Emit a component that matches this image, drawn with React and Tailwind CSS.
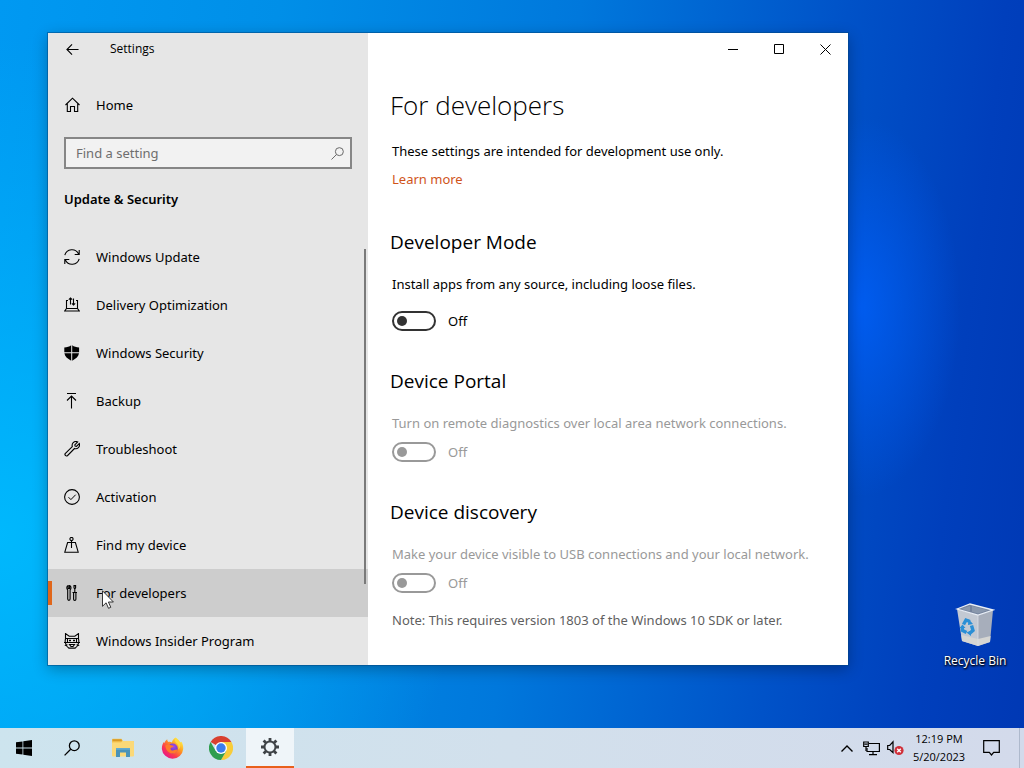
import { useState } from 'react';

const UpdateIcon = () => (
  <svg width="16" height="16" viewBox="0 0 16 16" fill="none" stroke="currentColor" strokeWidth="1.1">
    <path d="M.8 6.200A7.400 7.400 0 0 1 14.600 5M15.200 1v4.500h-4.500" />
    <path d="M15.200 9.800A7.400 7.400 0 0 1 1.400 11M.8 15v-4.500h4.500" />
  </svg>
);

const DeliveryIcon = () => (
  <svg width="16" height="16" viewBox="0 0 16 16" fill="none" stroke="currentColor" strokeWidth="1.1">
    <path d="M4 3.500H2.500v8M12 3.500h1.500v8M2.500 11.500h11l1.800 2.500H.7z" />
    <path d="M6.500 7.500V1M4.800 2.700 6.500 1l1.700 1.700M9.500 1.500V8M7.900 6.300 9.500 7.900l1.700-1.600" />
  </svg>
);

const ShieldIcon = () => (
  <svg width="16" height="16" viewBox="0 0 16 16" fill="currentColor">
    <path d="M7.200.2C5.500 1.600 3 2.400.3 2.400v4.900h6.900zM8.200.2c1.700 1.400 4.200 2.200 6.900 2.200v4.900H8.200zM.4 8.300h6.800v7.400C3.300 13.700.9 11.500.4 8.300zM15 8.300H8.200v7.400c3.900-2 6.300-4.200 6.800-7.400z" />
  </svg>
);

const BackupIcon = () => (
  <svg width="16" height="16" viewBox="0 0 16 16" fill="none" stroke="currentColor" strokeWidth="1.1">
    <path d="M3 .5h9M7.500 15.500V3M3 7.500 7.500 3 12 7.500" />
  </svg>
);

const WrenchIcon = () => (
  <svg width="16" height="16" viewBox="0 0 16 16" fill="none" stroke="currentColor" strokeWidth="1.1">
    <path d="M13.700.9 10.800 3.800l.3 1.300 1.300.3L15.300 2.500c.5 1.500.2 3.100-.9 4.200-1.100 1-2.500 1.300-3.900.8L3.400 14.700a1.600 1.600 0 0 1-2.200-2.200L8.300 5.600C7.900 4.100 8.100 2.700 9.200 1.600 10.400.4 12.200.2 13.700.9z" />
  </svg>
);

const ActivationIcon = () => (
  <svg width="16" height="16" viewBox="0 0 16 16" fill="none" stroke="currentColor">
    <circle cx="8" cy="8" r="7.400" strokeWidth="1.1" />
    <path d="m4.500 8.200 2.400 2.400 4.800-4.900" />
  </svg>
);

const FindIcon = () => (
  <svg width="16" height="16" viewBox="0 0 16 16" fill="none" stroke="currentColor" strokeWidth="1.1">
    <circle cx="7.500" cy="2" r="1.600" />
    <path d="M7.500 3.600V11M7.500 5.500H3.600L.8 15.200h13.400L11.400 5.500H7.500" />
  </svg>
);

const DevIcon = () => (
  <svg width="16" height="16" viewBox="0 0 16 16" fill="none" stroke="currentColor" strokeWidth="1.1">
    <path d="M4.200.5v3h1.400v-3c1 .4 1.400 1.300 1.400 2.300 0 .9-.3 1.600-.9 2v9.300c0 1.700-2.400 1.700-2.400 0V4.800c-.6-.4-.9-1.100-.9-2 0-1 .4-1.900 1.400-2.300z" />
    <path d="M10 .6h1.600v2.200L10.800 4 10 2.800zM10.800 4v3.500M8.500 7.500H13M9.600 7.500v6.700c0 1.600 2.300 1.600 2.300 0V7.500" />
  </svg>
);

const InsiderIcon = () => (
  <svg width="16" height="16" viewBox="0 0 16 16" fill="none" stroke="currentColor" strokeWidth="1.1">
    <path d="M1.500 6V.6l3.700 2.700h5.600L14.500.6V6c.4 1.300.5 2.700 0 4.200-.4 2-1.600 4-3.200 4.900H4.700C3.100 14.200 1.900 12.200 1.500 10.200 1 8.700 1.100 7.300 1.500 6z" />
    <path d="M1.500 5.500h13M3.500 5.500v4h9v-4M0 9.500h3.500M12.500 9.500H16M.8 12.500l2.700-.8M15.200 12.500l-2.700-.8M5.500 11.500h5l-1.500 2H7z" />
    <path d="M5 7.500h2M9 7.500h2" strokeWidth="1.600" />
  </svg>
);

const HomeIcon = () => (
  <svg width="16" height="16" viewBox="0 0 16 16" fill="none" stroke="currentColor" strokeWidth="1.1">
    <path d="M1.500 8 8.500 1.200 15.500 8M3.300 6.500v8h3.200V9.500h4v5h3.200v-8" />
  </svg>
);

const SearchIcon = ({ size, width }) => (
  <svg width={size} height={size} viewBox="0 0 16 16" fill="none" stroke="currentColor" strokeWidth={width}>
    <circle cx="10.300" cy="5.700" r="4.900" />
    <path d="M6.700 9.300.6 15.400" />
  </svg>
);

const FolderIcon = () => (
  <svg width="22" height="20" viewBox="0 0 22 20">
    <path d="M0 1.500Q0 .8.8.8h8.700L11 3h10q1 0 1 1v13H0z" fill="#f4c553" />
    <path d="M.5 1.200h9l.5 2H.5z" fill="#d99a26" />
    <path d="M0 4.500h9l1.500-1.500H21q1 0 1 1v13.500q0 1-1 1H1q-1 0-1-1z" fill="#fbd978" />
    <path d="M4 10h14v9h-4v-4.500H8V19H4z" fill="#4a93b8" />
    <path d="M4 10h14v1.800H4z" fill="#62abd0" />
  </svg>
);

const FirefoxIcon = () => (
  <svg width="23" height="23" viewBox="0 0 24 24">
    <defs>
      <linearGradient id="ff-body" x1="0.85" y1="0.1" x2="0.15" y2="0.9">
        <stop offset="0" stopColor="#fff04a" />
        <stop offset="0.35" stopColor="#ff9a1f" />
        <stop offset="0.7" stopColor="#fb3a4e" />
        <stop offset="1" stopColor="#e8158c" />
      </linearGradient>
      <radialGradient id="ff-globe" cx="0.6" cy="0.3" r="0.8">
        <stop offset="0" stopColor="#a050e8" />
        <stop offset="1" stopColor="#5a2bb8" />
      </radialGradient>
    </defs>
    <path d="M15.200.5c3.500 2 4 4.100 5.100 5 0 0 .6.200.9-.8 1.500 2 2.100 4.800 2 7.800A11.200 11.200 0 0 1 .9 12.400C.8 9.200 1.800 6.500 3.300 4.900c0 0-.2 1 .2 1.600C4.300 4.200 5.300 3.200 6.500 2.300c0 1.500.5 2.400 1.300 2.900 1.500-.3 2.800 0 3.600.5C11.900 3.500 13 1.700 15.200.5z" fill="url(#ff-body)" />
    <circle cx="12.200" cy="12" r="5.200" fill="url(#ff-globe)" />
    <path d="M4.500 9.200c1.500-1.600 4.200-1.900 6-.6 1.700.1 2.600.6 2.500 1.200-.3.900-2.800 1-3.100 2.100-.1 1.800 2 2.900 4.300 1.700 1.800-1 2.900-.5 3 .1-.9 2.700-3.700 4-6.300 3.400-4-.8-6-4.300-6.400-7.900z" fill="#ff7a2a" />
    <path d="M15.200 1c-1.600 2.900.2 4.600 1.800 6.200 1.600 1.800 1.800 4 .8 6.200 3.300-2.900 3-6.300.8-9z" fill="#ffdc3e" />
  </svg>
);

const ChromeIcon = () => (
  <svg width="24" height="24" viewBox="0 0 24 24">
    <path d="M12 12 1.600 6A12 12 0 0 1 22.400 6z" fill="#d8402f" />
    <path d="M12 6h10.400A12 12 0 0 1 12 24l5.200-9z" fill="#f8cc3a" />
    <path d="M1.600 6A12 12 0 0 0 12 24l5.200-9H6.800z" fill="#2f9e4e" />
    <circle cx="12" cy="12" r="6" fill="#fff" />
    <circle cx="12" cy="12" r="4.700" fill="#3b7ded" />
  </svg>
);

const GearIcon = () => (
  <svg width="18" height="18" viewBox="0 0 18 18" fill="none" stroke="#3f4347">
    <circle cx="9" cy="9" r="5.500" strokeWidth="2" />
    <path d="M9 0v3.500M9 14.500V18M0 9h3.500M14.500 9H18M2.600 2.600l2.500 2.500M12.900 12.900l2.500 2.500M2.600 15.400l2.500-2.500M12.900 5.100l2.500-2.500" strokeWidth="2.800" />
  </svg>
);

const RecycleBin = () => (
  <svg width="40" height="44" viewBox="0 0 40 44">
    <path d="M2 6 23 12 23 43 7 38z" fill="#c3c9d3" />
    <path d="M23 12 38 7l-3 32-12 4z" fill="#a7aebb" />
    <path d="M2 6 15 1l23 6-15 5z" fill="#74839d" />
    <path d="M6 6 15 3v5.500zM17 3l16 4.200-10 3.200-6-1.700z" fill="#8a98ad" />
    <path d="M6.300 32 23 36l12.600-3-.6 6-12 4L7 38z" fill="#d6d6d3" />
    <path d="M2 6 15 1l23 6-15 5z" fill="none" stroke="#e9eef5" strokeWidth="1.300" />
    <path d="M23 12v31" stroke="#dbe0e8" strokeWidth="0.800" />
    <g fill="none" stroke="#2a8fd6" strokeWidth="3.400">
      <path d="M8.500 21.500l2.500-4.500 4 1.500" />
      <path d="M16.500 22.500l1.500 5-3.500 3" />
      <path d="M11.500 29.500 7.500 27.500l-.3-3.500" />
    </g>
    <path d="M13.500 16l4.500 5-5 1zM16 27.500v5.500l-4.500-3.500zM4.500 25l3-3.500 3 3.500z" fill="#2a8fd6" />
  </svg>
);

const NAV = [
  { label: 'Windows Update', Icon: UpdateIcon },
  { label: 'Delivery Optimization', Icon: DeliveryIcon },
  { label: 'Windows Security', Icon: ShieldIcon },
  { label: 'Backup', Icon: BackupIcon },
  { label: 'Troubleshoot', Icon: WrenchIcon },
  { label: 'Activation', Icon: ActivationIcon },
  { label: 'Find my device', Icon: FindIcon },
  { label: 'For developers', Icon: DevIcon },
  { label: 'Windows Insider Program', Icon: InsiderIcon },
];

function Toggle({ id, disabled }) {
  const [on, setOn] = useState(false);
  return (
    <div className={`flex items-center gap-3 pl-1 h-5 ${disabled ? 'text-[#999999]' : 'text-black'}`}>
      <input
        id={id}
        type="checkbox"
        checked={on}
        disabled={disabled}
        onChange={(e) => setOn(e.target.checked)}
        className="appearance-none w-11 h-5 shrink-0 rounded-full border-2 border-[#333333] disabled:border-[#999999] flex items-center px-[3px] before:block before:size-[10px] before:rounded-full before:bg-[#333333] disabled:before:bg-[#999999] checked:justify-end"
      />
      <label htmlFor={id}>{on ? 'On' : 'Off'}</label>
    </div>
  );
}

function Sidebar() {
  const [active, setActive] = useState('For developers');
  return (
    <aside className="relative w-80 shrink-0 bg-[#e6e6e6] overflow-hidden">
      {/* Title bar */}
      <div className="h-8 flex items-center">
        <button aria-label="Back" className="w-12 h-8 flex items-center justify-center">
          <svg width="13" height="13" viewBox="0 0 14 14" fill="none" stroke="currentColor" strokeWidth="1.2">
            <path d="M13.500 7H1M6.500 1.500 1 7l5.500 5.500" />
          </svg>
        </button>
        <span className="ml-[14px] text-[12px] font-['Open_Sans']">Settings</span>
      </div>

      <button className="mt-4 w-full h-12 px-4 flex items-center gap-4">
        <HomeIcon />
        Home
      </button>

      <div className="mx-4 mt-2 h-8 flex items-center border-2 border-[#868686] bg-[#f2f2f2] text-[#666666] pl-[10px] pr-[6px]">
        <input
          type="text"
          aria-label="Find a setting"
          placeholder="Find a setting"
          className="flex-1 min-w-0 bg-transparent outline-none placeholder:text-[#6e6e6e]"
        />
        <SearchIcon size={13} width={1.2} />
      </div>

      <h2 className="mx-4 mt-5 leading-5 font-semibold">Update &amp; Security</h2>

      <nav className="mt-6">
        {NAV.map(({ label, Icon }) => (
          <button
            key={label}
            onClick={() => setActive(label)}
            className={`relative w-full h-12 px-4 flex items-center gap-4 ${active === label ? 'bg-[#cdcdcd]' : ''}`}
          >
            {active === label && <span className="absolute left-0 top-3 w-1 h-6 bg-[#e0661a]" />}
            <Icon />
            {label}
          </button>
        ))}
      </nav>

      {/* Scrollbar */}
      <div className="absolute right-[2px] top-[216px] bottom-[81px] w-[2px] bg-[#7a7a7a]" />

      {/* Mouse pointer */}
      <svg className="absolute left-[54px] top-[557px]" width="12" height="19" viewBox="0 0 12 19">
        <path d="M.5.8v15.500l3.600-3.500 2.400 5.500 2.300-1-2.400-5.300h5z" fill="#fff" stroke="#222" strokeWidth="0.9" />
      </svg>
    </aside>
  );
}

function Content() {
  return (
    <section className="flex-1 min-w-0 bg-white overflow-hidden">
      <div className="h-8 flex justify-end">
        <button aria-label="Minimize" className="w-[46px] flex items-center justify-center">
          <svg width="10" height="10" viewBox="0 0 10 10" stroke="currentColor"><path d="M0 5.500h10" /></svg>
        </button>
        <button aria-label="Maximize" className="w-[46px] flex items-center justify-center">
          <svg width="10" height="10" viewBox="0 0 10 10" fill="none" stroke="currentColor"><path d="M.5.5h9v9h-9z" /></svg>
        </button>
        <button aria-label="Close" className="w-[46px] flex items-center justify-center">
          <svg width="11" height="11" viewBox="0 0 11 11" stroke="currentColor"><path d="m.5.5 10 10M10.500.5l-10 10" /></svg>
        </button>
      </div>

      <div className="pl-5 pr-5">
        <h1 className="mt-[22px] pl-0.5 text-[26px] leading-9 font-light font-['Open_Sans']">For developers</h1>
        <p className="mt-[18px] pl-1">These settings are intended for development use only.</p>
        <p className="mt-2 pl-1"><a href="#learn" className="text-[#d0541a]">Learn more</a></p>

        <h2 className="mt-[39px] pl-0.5 text-[19px] leading-7 font-['Open_Sans']">Developer Mode</h2>
        <p className="mt-[18px] mb-[17px] pl-1">Install apps from any source, including loose files.</p>
        <Toggle id="developer-mode" />

        <h2 className="mt-9 pl-0.5 text-[19px] leading-7 font-['Open_Sans']">Device Portal</h2>
        <p className="mt-[18px] mb-[9px] pl-1 text-[#999999]">Turn on remote diagnostics over local area network connections.</p>
        <Toggle id="device-portal" disabled />

        <h2 className="mt-9 pl-0.5 text-[19px] leading-7 font-['Open_Sans']">Device discovery</h2>
        <p className="mt-[18px] mb-[9px] pl-1 text-[#999999]">Make your device visible to USB connections and your local network.</p>
        <Toggle id="device-discovery" disabled />
        <p className="mt-[17px] pl-1 text-[#5f5f5f]">Note: This requires version 1803 of the Windows 10 SDK or later.</p>
      </div>
    </section>
  );
}

function Taskbar() {
  return (
    <footer className="h-10 shrink-0 flex items-stretch bg-gradient-to-r from-[#cde4ee] via-[#d2e0ec] to-[#d3daeb]">
      <button aria-label="Start" className="w-12 flex items-center justify-center">
        <svg width="16" height="16" viewBox="0 0 16 16" fill="#000">
          <path d="M0 2.300 6.500 1.400v6.200H0zM7.300 1.300 16 0v7.600H7.300zM0 8.400h6.500v6.200L0 13.700zM7.300 8.400H16V16l-8.700-1.300z" />
        </svg>
      </button>
      <button aria-label="Search" className="w-12 flex items-center justify-center">
        <SearchIcon size={16} width={1.3} />
      </button>
      <div className="pl-[3px] flex gap-px">
        <button aria-label="File Explorer" className="w-12 flex items-center justify-center"><FolderIcon /></button>
        <button aria-label="Firefox" className="w-12 flex items-center justify-center"><FirefoxIcon /></button>
        <button aria-label="Chrome" className="w-12 flex items-center justify-center"><ChromeIcon /></button>
        <button aria-label="Settings" className="w-12 flex items-center justify-center bg-[#eff5f9] border-b-2 border-[#e8601c]"><GearIcon /></button>
      </div>

      {/* Tray */}
      <div className="ml-auto flex items-center">
        <button aria-label="Show hidden icons" className="w-6 h-full flex items-center justify-center">
          <svg width="12" height="7" viewBox="0 0 12 7" fill="none" stroke="currentColor" strokeWidth="1.4"><path d="M.5 6.500 6 1l5.500 5.500" /></svg>
        </button>
        <button aria-label="Network" className="w-6 h-full flex items-center justify-center">
          <svg width="17" height="15" viewBox="0 0 17 15" fill="none" stroke="currentColor" strokeWidth="1.2">
            <path d="M6 2.500h10.400v8H4V7M10 10.500v3M6 13.700h8" />
            <path d="M.7 1h4.600v4.500H.7zM3 5.500V10M1.500 3.200h3" />
          </svg>
        </button>
        <button aria-label="Volume muted" className="w-6 h-full flex items-center justify-center">
          <svg width="17" height="16" viewBox="0 0 17 16" fill="none" stroke="currentColor" strokeWidth="1.2">
            <path d="M.7 5.500h2L6 1.800v10.900L2.700 9.500h-2z" />
            <circle cx="12" cy="10.500" r="4.600" fill="#d0303a" stroke="none" />
            <path d="m10.200 8.700 3.600 3.600M13.800 8.700l-3.600 3.600" stroke="#fff" strokeWidth="1.4" />
          </svg>
        </button>
        <div className="w-[64px] text-center text-[11px] leading-[18px] whitespace-nowrap font-['Open_Sans']">
          <div>12:19 PM</div>
          <div>5/20/2023</div>
        </div>
        <button aria-label="Notifications" className="w-10 h-full flex items-center justify-center">
          <svg width="17" height="16" viewBox="0 0 17 16" fill="none" stroke="currentColor" strokeWidth="1.2">
            <path d="M.7.7h15.600v11.600h-5.600L8.500 15l-2.200-2.700H.7z" />
          </svg>
        </button>
        <button aria-label="Show desktop" className="ml-2 w-[5px] h-full border-l border-[#aeb9cc]" />
      </div>
    </footer>
  );
}

export default function App() {
  return (
    <div className="h-screen flex flex-col text-[13px] leading-5 text-black font-['Noto_Sans','Open_Sans',sans-serif] bg-[radial-gradient(ellipse_100px_190px_at_84%_40%,rgba(0,96,250,0.8),transparent),radial-gradient(ellipse_45%_65%_at_0%_70%,rgba(0,190,255,0.85),transparent),linear-gradient(97deg,#0099f2_0%,#008fe8_25%,#0078dc_52%,#0052c8_76%,#003fbc_90%,#0038b4_100%)]">
      <main className="relative flex-1 min-h-0 flex pt-[33px] pl-12 pr-44 pb-[63px]">
        <div className="flex-1 min-w-0 flex shadow-[0_0_0_1px_rgba(0,70,130,0.5),0_4px_14px_rgba(0,0,0,0.3)]">
          <Sidebar />
          <Content />
        </div>

        {/* Desktop icon */}
        <button className="absolute right-3 bottom-[57px] w-[74px] flex flex-col items-center gap-1 text-[12px] leading-5 text-white whitespace-nowrap font-['Open_Sans'] [text-shadow:1px_1px_2px_#000,0_1px_2px_#000]">
          <RecycleBin />
          Recycle Bin
        </button>
      </main>
      <Taskbar />
    </div>
  );
}
